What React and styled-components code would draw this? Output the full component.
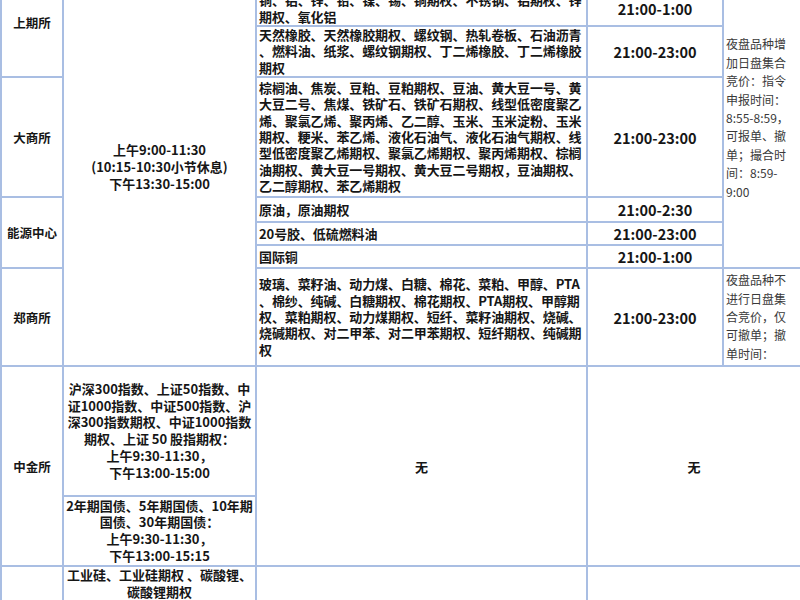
import React from 'react';
import styled, { createGlobalStyle } from 'styled-components';

const GlobalStyle = createGlobalStyle`
  html, body {
    margin: 0;
    padding: 0;
    background: #ffffff;
  }
`;

const Viewport = styled.div`
  width: 800px;
  height: 600px;
  overflow: hidden;
  background: #ffffff;
`;

// 표는 위쪽이 잘린 상태로 보임
const Sheet = styled.table`
  margin-top: -33px;
  width: 800px;
  border-collapse: collapse;
  table-layout: fixed;
  font-family: "Noto Sans CJK SC", "Noto Sans", sans-serif;
  color: #161616;
`;

const Row = styled.tr`
  height: ${props => props.$h}px;
`;

const Cell = styled.td`
  border: 2px solid #a9bee3;
  padding: 0 2px;
  vertical-align: ${props => props.$valign || 'middle'};
  overflow: hidden;
`;

const Exchange = styled(Cell)`
  text-align: center;
  font-size: 12.5px;
  font-weight: 700;
`;

const Session = styled(Cell)`
  text-align: center;
  font-size: 13px;
  line-height: 16.8px;
  font-weight: 700;
  white-space: nowrap;
`;

const Products = styled(Cell)`
  text-align: left;
  font-size: 13px;
  letter-spacing: -0.1px;
  line-height: 16.4px;
  font-weight: 700;
  white-space: nowrap;
`;

const Night = styled(Cell)`
  text-align: center;
  font-size: 14.5px;
  font-weight: 700;
  white-space: nowrap;
`;

const Note = styled(Cell)`
  text-align: left;
  font-size: 12px;
  line-height: 18.4px;
  font-weight: 400;
  color: #3a3a3a;
  white-space: nowrap;
`;

const Empty = styled(Cell)`
  text-align: center;
  font-size: 13px;
  font-weight: 700;
`;

function Lines({ items }) {
  return items.map((t, i) => (
    <React.Fragment key={i}>
      {i > 0 && <br />}
      {t}
    </React.Fragment>
  ));
}

const 大商所품목 = [
  '棕榈油、焦炭、豆粕、豆粕期权、豆油、黄大豆一号、黄',
  '大豆二号、焦煤、铁矿石、铁矿石期权、线型低密度聚乙',
  '烯、聚氯乙烯、聚丙烯、乙二醇、玉米、玉米淀粉、玉米',
  '期权、粳米、苯乙烯、液化石油气、液化石油气期权、线',
  '型低密度聚乙烯期权、聚氯乙烯期权、聚丙烯期权、棕榈',
  '油期权、黄大豆一号期权、黄大豆二号期权，豆油期权、',
  '乙二醇期权、苯乙烯期权',
];

const 郑商所품목 = [
  '玻璃、菜籽油、动力煤、白糖、棉花、菜粕、甲醇、PTA',
  '、棉纱、纯碱、白糖期权、棉花期权、PTA期权、甲醇期',
  '权、菜粕期权、动力煤期权、短纤、菜籽油期权、烧碱、',
  '烧碱期权、对二甲苯、对二甲苯期权、短纤期权、纯碱期',
  '权',
];

export default function App() {
  return (
    <Viewport>
      <GlobalStyle />
      <Sheet>
        <colgroup>
          <col style={{ width: 62 }} />
          <col style={{ width: 193 }} />
          <col style={{ width: 331 }} />
          <col style={{ width: 136 }} />
          <col style={{ width: 78 }} />
        </colgroup>
        <tbody>
          <Row $h={23}>
            <Exchange rowSpan={3}>上期所</Exchange>
            <Session rowSpan={8}>
              <Lines items={['上午9:00-11:30', '(10:15-10:30小节休息)', '下午13:30-15:00']} />
            </Session>
            <Products>黄金、白银、黄金期权、白银期权</Products>
            <Night>21:00-2:30</Night>
            <Note rowSpan={7}>
              <Lines
                items={['夜盘品种增', '加日盘集合', '竞价：指令', '申报时间：', '8:55-8:59，', '可报单、撤', '单；撮合时', '间：8:59-', '9:00']}
              />
            </Note>
          </Row>
          <Row $h={35}>
            <Products>
              <Lines items={['铜、铝、锌、铅、镍、锡、铜期权、不锈钢、铝期权、锌', '期权、氧化铝']} />
            </Products>
            <Night>21:00-1:00</Night>
          </Row>
          <Row $h={51}>
            <Products>
              <Lines
                items={['天然橡胶、天然橡胶期权、螺纹钢、热轧卷板、石油沥青', '、燃料油、纸浆、螺纹钢期权、丁二烯橡胶、丁二烯橡胶', '期权']}
              />
            </Products>
            <Night>21:00-23:00</Night>
          </Row>
          <Row $h={120}>
            <Exchange>大商所</Exchange>
            <Products>
              <Lines items={大商所품목} />
            </Products>
            <Night>21:00-23:00</Night>
          </Row>
          <Row $h={25}>
            <Exchange rowSpan={3}>能源中心</Exchange>
            <Products>原油，原油期权</Products>
            <Night>21:00-2:30</Night>
          </Row>
          <Row $h={23}>
            <Products>20号胶、低硫燃料油</Products>
            <Night>21:00-23:00</Night>
          </Row>
          <Row $h={21}>
            <Products>国际铜</Products>
            <Night>21:00-1:00</Night>
          </Row>
          <Row $h={98}>
            <Exchange>郑商所</Exchange>
            <Products>
              <Lines items={郑商所품목} />
            </Products>
            <Night>21:00-23:00</Night>
            <Note>
              <Lines items={['夜盘品种不', '进行日盘集', '合竞价，仅', '可撤单；撤', '单时间：']} />
            </Note>
          </Row>
          <Row $h={130}>
            <Exchange rowSpan={2}>中金所</Exchange>
            <Session>
              <Lines
                items={['沪深300指数、上证50指数、中', '证1000指数、中证500指数、沪', '深300指数期权、中证1000指数', '期权、上证 50 股指期权：', '上午9:30-11:30，', '下午13:00-15:00']}
              />
            </Session>
            <Empty rowSpan={2}>无</Empty>
            <Empty rowSpan={2} colSpan={2}>无</Empty>
          </Row>
          <Row $h={70}>
            <Session>
              <Lines items={['2年期国债、5年期国债、10年期', '国债、30年期国债：', '上午9:30-11:30，', '下午13:00-15:15']} />
            </Session>
          </Row>
          <Row $h={120}>
            <Exchange>广期所</Exchange>
            <Session $valign="top">
              <Lines items={['工业硅、工业硅期权 、碳酸锂、', '碳酸锂期权', '上午9:00-11:30', '(10:15-10:30小节休息)', '下午13:30-15:00']} />
            </Session>
            <Empty>无</Empty>
            <Empty colSpan={2}>无</Empty>
          </Row>
        </tbody>
      </Sheet>
    </Viewport>
  );
}
